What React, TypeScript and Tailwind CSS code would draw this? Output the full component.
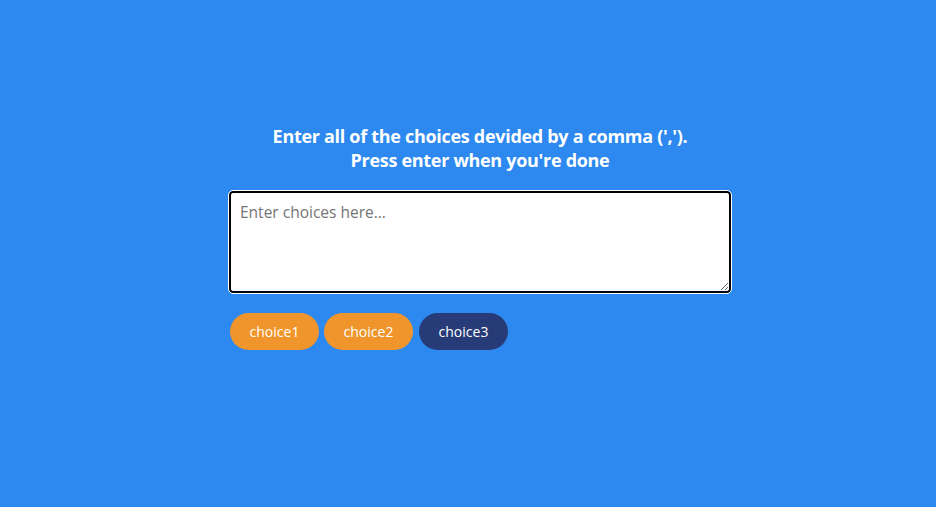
import React from "react";

export default function App() {
  const choices = [
    { label: "choice1", cls: "bg-[#f0952b]" },
    { label: "choice2", cls: "bg-[#f0952b]" },
    { label: "choice3", cls: "bg-[#263b78]" },
  ];
  return (
    <div
      className="w-[936px] h-[507px] bg-[#2d89ef] pl-6 pt-[124px]"
      style={{ fontFamily: "'Open Sans', sans-serif" }}
    >
      <div className="w-[502px] mx-auto flex flex-col">
        <h1 className="text-white font-bold text-[18px] leading-[24px] text-center tracking-[-0.3px]">
          Enter all of the choices devided by a comma (',').
          <br />
          Press enter when you're done
        </h1>
        <textarea
          placeholder="Enter choices here..."
          className="mt-[19px] w-[502px] h-[102px] bg-white border-2 border-black rounded-[4px] outline outline-1 outline-white px-[9px] pt-[8px] text-[15.5px] text-black placeholder:text-[#757575] resize-y"
          style={{ fontFamily: "'Open Sans', sans-serif" }}
        />
        <div className="mt-[20px] flex gap-[5px] pl-[1px]">
          {choices.map((c, i) => (
            <div
              key={c.label}
              className={`${c.cls} ${i === 2 ? "ml-[1px]" : ""} w-[89px] h-[37px] rounded-full flex items-center justify-center text-white text-[14px]`}
              style={{ fontFamily: "'Open Sans', sans-serif" }}
            >
              {c.label}
            </div>
          ))}
        </div>
      </div>
    </div>
  );
}
